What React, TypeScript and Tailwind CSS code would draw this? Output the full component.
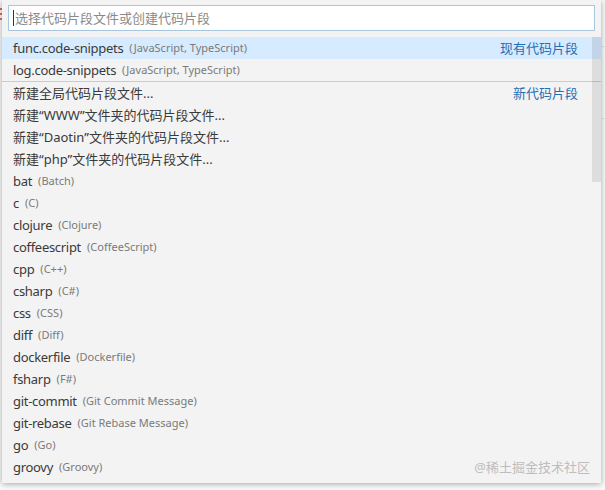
import React from "react";

const items: { name: string; desc?: string; right?: string; sep?: boolean; hl?: boolean; cjk?: boolean }[] = [
  { name: "func.code-snippets", desc: "(JavaScript, TypeScript)", right: "现有代码片段", hl: true },
  { name: "log.code-snippets", desc: "(JavaScript, TypeScript)" },
  { name: "新建全局代码片段文件...", right: "新代码片段", sep: true, cjk: true },
  { name: "新建“WWW”文件夹的代码片段文件...", cjk: true },
  { name: "新建“Daotin”文件夹的代码片段文件...", cjk: true },
  { name: "新建“php”文件夹的代码片段文件...", cjk: true },
  { name: "bat", desc: "(Batch)" },
  { name: "c", desc: "(C)" },
  { name: "clojure", desc: "(Clojure)" },
  { name: "coffeescript", desc: "(CoffeeScript)" },
  { name: "cpp", desc: "(C++)" },
  { name: "csharp", desc: "(C#)" },
  { name: "css", desc: "(CSS)" },
  { name: "diff", desc: "(Diff)" },
  { name: "dockerfile", desc: "(Dockerfile)" },
  { name: "fsharp", desc: "(F#)" },
  { name: "git-commit", desc: "(Git Commit Message)" },
  { name: "git-rebase", desc: "(Git Rebase Message)" },
  { name: "go", desc: "(Go)" },
  { name: "groovy", desc: "(Groovy)" },
];

export default function App() {
  return (
    <div
      className="w-[605px] h-[490px] bg-[#fafafa] flex relative overflow-hidden"
      style={{ fontFamily: '"Noto Sans", "Noto Sans CJK SC", sans-serif' }}
    >
      <div className="w-[2px] flex flex-col pt-[8px] gap-[3px] shrink-0">
        <div className="h-[2px] bg-[#e06c5a]" />
        <div className="h-[2px] bg-[#e06c5a]" />
        <div className="h-[2px] bg-[#e06c5a]" />
      </div>
      <div className="w-[599px] h-[483px] bg-[#f3f3f3] shadow-[0_1px_6px_rgba(0,0,0,0.35)] flex flex-col relative">
        <div className="px-[6px] pt-[5px] pb-[6px]">
          <div className="h-[26px] bg-white border border-[#a7c7e1] flex items-center pl-[4px]">
            <div className="w-px h-[16px] bg-[#333] mr-[1px]" />
            <span className="text-[13px] text-[#8a8a8a] leading-none">选择代码片段文件或创建代码片段</span>
          </div>
        </div>
        <div className="flex-1 flex relative">
          <div className="flex-1 flex flex-col">
            {items.map((it, i) => (
              <div
                key={i}
                className={
                  "flex items-center pl-[11px] pr-[23px] shrink-0 pt-[1px] " +
                  (it.hl ? "bg-[#d6ebff] " : "") +
                  (it.sep ? "border-t border-[#cccccc] h-[23px] " : "h-[22px] ")
                }
              >
                <span
                  className={
                    "text-[13px] text-[#3a3a3a] whitespace-nowrap " + (it.cjk ? "" : "tracking-[-0.3px]")
                  }
                >
                  {it.name}
                </span>
                {it.desc && (
                  <span className="text-[11px] text-[#7a7a7a] ml-[6px] whitespace-nowrap">{it.desc}</span>
                )}
                {it.right && (
                  <span className="ml-auto text-[13px] text-[#1f6fb4] whitespace-nowrap">{it.right}</span>
                )}
              </div>
            ))}
          </div>
          <div className="absolute right-0 top-0 w-[9px] h-[145px] bg-[#000000]/[0.09]" />
          <div className="absolute right-[11px] bottom-[6px] text-[13px] text-[#bdbdbd]">@稀土掘金技术社区</div>
        </div>
      </div>
      <div className="flex-1 flex flex-col">
        <div className="h-[47px] border-b border-[#e4e4e4]" />
        <div className="h-[72px] border-b border-[#e4e4e4]" />
      </div>
    </div>
  );
}
